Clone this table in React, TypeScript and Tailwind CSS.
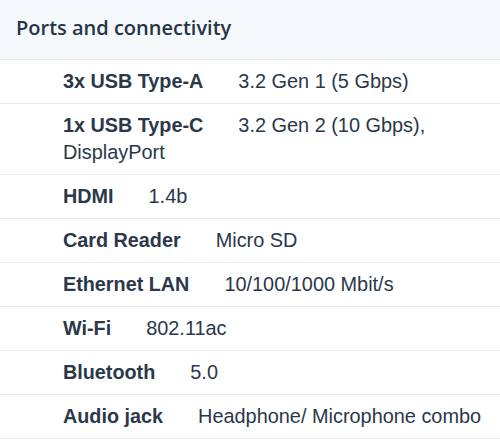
import React from "react";

const rows: [string, string][] = [
  ["3x USB Type-A", "3.2 Gen 1 (5 Gbps)"],
  ["1x USB Type-C", "3.2 Gen 2 (10 Gbps), DisplayPort"],
  ["HDMI", "1.4b"],
  ["Card Reader", "Micro SD"],
  ["Ethernet LAN", "10/100/1000 Mbit/s"],
  ["Wi-Fi", "802.11ac"],
  ["Bluetooth", "5.0"],
  ["Audio jack", "Headphone/ Microphone combo"],
];

export default function App() {
  return (
    <div className="w-[500px] h-[440px] overflow-hidden bg-white text-[#2a384a]">
      <div className="h-[60px] bg-[#f5f9fc] border-b border-[#e2ebf4] pl-4 flex items-center">
        <h2 className="font-['Open_Sans',sans-serif] font-semibold text-[20px] pb-[3px] text-[#263447]">
          Ports and connectivity
        </h2>
      </div>
      {rows.map(([k, v]) => (
        <div
          key={k}
          className="border-b border-[#e2ebf4] pl-[63px] pr-2 py-[8px] font-['Liberation_Sans',Arial,sans-serif] text-[19.9px] leading-[27px]"
        >
          <span className="font-bold text-[19.8px] mr-[35px]">{k}</span>
          <span>{v}</span>
        </div>
      ))}
    </div>
  );
}
